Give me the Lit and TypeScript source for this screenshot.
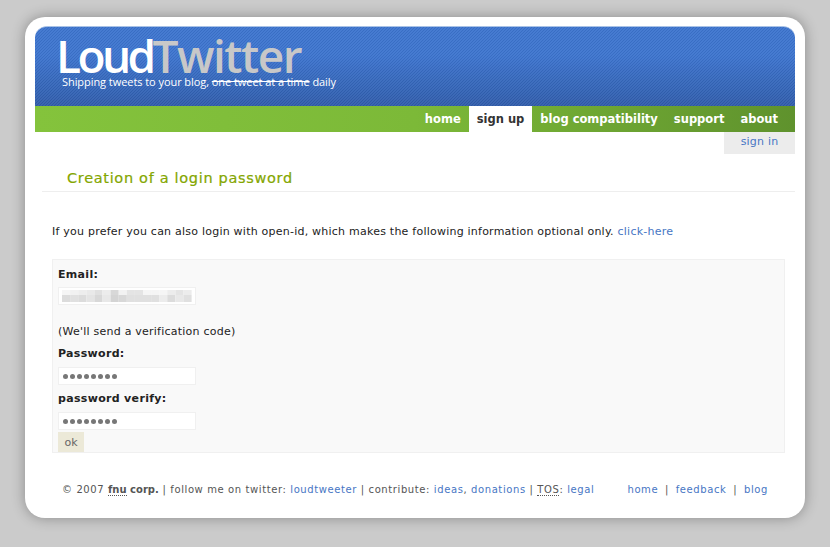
import { LitElement, html, css, svg } from "lit";
import { customElement } from "lit/decorators.js";

// blurred email field, two rows of grey cells
const blurTop = ["#f5f5f5", "#f1f1f1", "#ededed", "#e9e9e9", "#e0e0e0", "#ececec", "#d8d8d8", "#f2f2f2", "#e4e4e4", "#e4e4e4", "#f5f5f5", "#f5f5f5", "#f5f5f5", "#ececec", "#e4e4e4", "#ececec"];
const blurBottom = ["#dcdcdc", "#e0e0e0", "#dcdcdc", "#e4e4e4", "#d8d8d8", "#e8e8e8", "#d4d4d4", "#d8d8d8", "#e0e0e0", "#e0e0e0", "#e0e0e0", "#e0e0e0", "#ececec", "#dcdcdc", "#e8e8e8", "#e0e0e0"];

@customElement("app-root")
export class AppRoot extends LitElement {
  static override styles = css`
    :host {
      display: block;
      height: 547px;
      box-sizing: border-box;
      padding: 17px 25px 0;
      background: #cbcbcb;
      font-family: "DejaVu Sans", Verdana, sans-serif;
      font-size: 11px;
      color: #222;
      overflow: hidden;
    }
    a { color: #4776c4; text-decoration: none; }
    .card {
      height: 501px;
      box-sizing: border-box;
      padding: 9px 10px 0;
      background: #fff;
      border-radius: 20px;
      box-shadow: 0 0 14px rgba(0, 0, 0, 0.32);
    }
    .banner {
      height: 80px;
      box-sizing: border-box;
      padding: 8px 0 0 21px;
      border-radius: 12px 12px 0 0;
      border-top: 1px solid #a9c2e6;
      background:
        linear-gradient(135deg,
          rgba(255, 255, 255, 0.05) 25%, rgba(0, 0, 0, 0.05) 25% 50%,
          rgba(255, 255, 255, 0.05) 50% 75%, rgba(0, 0, 0, 0.05) 75%) 0 0 / 3px 3px,
        linear-gradient(#3c74cf 0%, #3c74cf 35%, #2f5cab 100%);
      color: #fff;
    }
    .logo {
      font-family: "Open Sans", sans-serif;
      font-size: 46px;
      font-weight: 600;
      line-height: 40px;
      letter-spacing: -3.6px;
      height: 40px;
    }
    .logo span { color: #c8c8c8; letter-spacing: -1.5px; }
    .tagline {
      margin: 0 0 0 6px;
      font-family: "Open Sans", sans-serif;
      font-size: 11px;
      line-height: 14px;
      letter-spacing: -0.06px;
    }
    .nav {
      display: flex;
      justify-content: flex-end;
      height: 26px;
      padding-right: 9px;
      background: linear-gradient(90deg, #84c33c 0%, #7cb938 50%, #5f922d 100%);
    }
    .nav a {
      padding: 0 8px;
      line-height: 26px;
      font-size: 11.5px;
      font-weight: 700;
      color: #fff;
    }
    .nav a.on { background: #fff; color: #333; }
    .sub { display: flex; justify-content: flex-end; }
    .sub a {
      width: 71px;
      height: 22px;
      line-height: 19px;
      text-align: center;
      background: #ececec;
      letter-spacing: 0.2px;
    }
    h1 {
      margin: 15px 0 0 7px;
      padding: 1px 0 4px 25px;
      height: 17px;
      font-size: 14.5px;
      line-height: 17px;
      font-weight: 400;
      color: #84a600;
      letter-spacing: 0.68px;
      border-bottom: 1px solid #eee;
      -webkit-text-stroke: 0.2px #84a600;
    }
    .intro { margin: 33px 0 0 17px; line-height: 14px; letter-spacing: 0.23px; }
    form {
      margin: 20px 10px 0 17px;
      height: 194px;
      box-sizing: border-box;
      padding: 8px 5px 0;
      background: #f9f9f9;
      border: 1px solid #f0f0f0;
      display: flex;
      flex-direction: column;
      align-items: flex-start;
    }
    label { font-weight: 700; line-height: 14px; letter-spacing: 0.32px; color: #222; }
    .field {
      width: 138px;
      height: 18px;
      box-sizing: border-box;
      background: #fff;
      border: 1px solid #f0f0f0;
      display: flex;
      align-items: center;
      padding-left: 4px;
      color: #777;
    }
    .field svg { display: block; margin-left: -1px; }
    .dots { display: flex; gap: 2px; }
    .dots i { width: 5px; height: 5px; border-radius: 50%; background: #777; }
    .note { margin-top: 20px; line-height: 14px; letter-spacing: 0.23px; }
    button {
      width: 26px;
      height: 20px;
      margin-top: 2px;
      padding: 0;
      border: 0;
      background: #ece9d8;
      color: #666;
      font: inherit;
      font-size: 11px;
    }
    footer {
      display: flex;
      justify-content: space-between;
      margin: 30px 27px 0 27px;
      font-size: 10px;
      line-height: 14px;
      color: #555;
      letter-spacing: 0.6px;
    }
    footer b { font-weight: 700; letter-spacing: 0; }
    abbr { text-decoration: none; border-bottom: 1px dotted #555; }
    .sep { margin: 0 3px; }
  `;

  private dots() {
    return html`<div class="dots">${Array.from({ length: 8 }, () => html`<i></i>`)}</div>`;
  }

  override render() {
    return html`
      <div class="card">
        <div class="banner">
          <div class="logo">Loud<span>Twitter</span></div>
          <div class="tagline">Shipping tweets to your blog, <s>one tweet at a time</s> daily</div>
        </div>
        <nav class="nav">
          <a href="#">home</a>
          <a href="#" class="on">sign up</a>
          <a href="#">blog compatibility</a>
          <a href="#">support</a>
          <a href="#">about</a>
        </nav>
        <div class="sub"><a href="#">sign in</a></div>
        <h1>Creation of a login password</h1>
        <p class="intro">
          If you prefer you can also login with open-id, which makes the following information optional only.
          <a href="#">click-here</a>
        </p>
        <form>
          <label>Email:</label>
          <div class="field" style="margin-top:5px">
            <svg width="130" height="12" viewBox="0 0 130 12">
              ${blurTop.map((c, i) => svg`<rect x=${i * 8.1} y="0" width="8.1" height="5" fill=${c}></rect>`)}
              ${blurBottom.map((c, i) => svg`<rect x=${i * 8.1} y="5" width="8.1" height="7" fill=${c}></rect>`)}
            </svg>
          </div>
          <div class="note">(We'll send a verification code)</div>
          <label style="margin-top:8px">Password:</label>
          <div class="field" style="margin-top:6px">${this.dots()}</div>
          <label style="margin-top:7px">password verify:</label>
          <div class="field" style="margin-top:6px">${this.dots()}</div>
          <button type="button">ok</button>
        </form>
        <footer>
          <div>
            © 2007 <b><abbr>fnu</abbr> corp.</b> | follow me on twitter: <a href="#">loudtweeter</a> | contribute:
            <a href="#">ideas</a>, <a href="#">donations</a> | <abbr>TOS</abbr>: <a href="#">legal</a>
          </div>
          <div>
            <a href="#">home</a><span class="sep"> | </span><a href="#">feedback</a><span class="sep"> | </span><a href="#">blog</a>
          </div>
        </footer>
      </div>
    `;
  }
}
